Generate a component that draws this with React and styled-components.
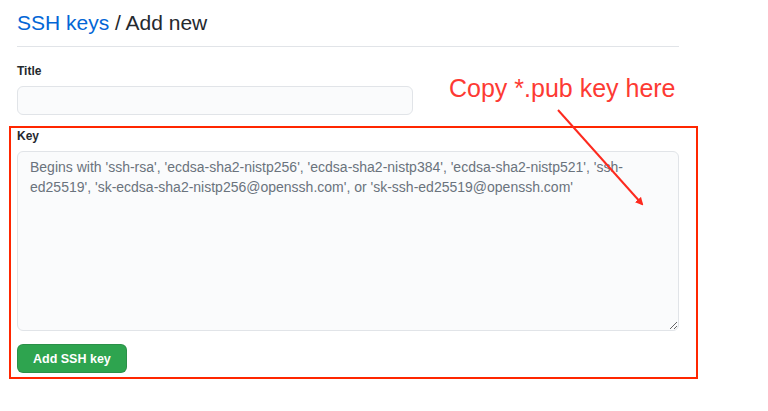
import React from "react";
import styled, { createGlobalStyle } from "styled-components";

const GlobalStyle = createGlobalStyle`
  body {
    margin: 0;
    background: #fff;
    font-family: "Liberation Sans", Arial, sans-serif;
    color: #24292e;
  }
`;

function App() {
  return (
    <>
      <GlobalStyle />
      <Page>
        <Header>
          <Crumb href="#">SSH keys</Crumb> / Add new
        </Header>
        <Field>
          <Label>Title</Label>
          <TitleInput type="text" />
        </Field>
        <Highlight>
          <Label>Key</Label>
          <KeyArea placeholder="Begins with 'ssh-rsa', 'ecdsa-sha2-nistp256', 'ecdsa-sha2-nistp384', 'ecdsa-sha2-nistp521', 'ssh-ed25519', 'sk-ecdsa-sha2-nistp256@openssh.com', or 'sk-ssh-ed25519@openssh.com'" />
          <SubmitButton>Add SSH key</SubmitButton>
        </Highlight>
        <Note>Copy *.pub key here</Note>
        <Arrow width="768" height="411" viewBox="0 0 768 411">
          <defs>
            <marker
              id="head"
              markerWidth="8"
              markerHeight="8"
              refX="6"
              refY="4"
              orient="auto"
              markerUnits="userSpaceOnUse"
            >
              <path d="M0,0 L8,4 L0,8 Z" fill="#fd2a1f" />
            </marker>
          </defs>
          <line
            x1="558"
            y1="110"
            x2="642"
            y2="204"
            stroke="#fd2a1f"
            strokeWidth="2"
            markerEnd="url(#head)"
          />
        </Arrow>
      </Page>
    </>
  );
}

export default App;

const Page = styled.div`
  position: relative;
  width: 662px;
  padding: 0 0 0 17px;
  height: 411px;
`;

const Header = styled.h1`
  margin: 0;
  padding: 10px 0 10px;
  font-size: 21px;
  font-weight: 400;
  line-height: 26px;
  border-bottom: 1px solid #e1e4e8;
  color: #24292e;
`;

const Crumb = styled.a`
  color: #0366d6;
  text-decoration: none;
`;

const Field = styled.div`
  margin-top: 17px;
`;

const Label = styled.label`
  display: block;
  font-size: 12px;
  font-weight: 700;
  line-height: 15px;
  margin-bottom: 7px;
  color: #24292e;
`;

const TitleInput = styled.input`
  display: block;
  box-sizing: border-box;
  width: 396px;
  height: 29px;
  margin: 0;
  border: 1px solid #e1e4e8;
  border-radius: 6px;
  background: #fafbfc;
  outline: none;
`;

const Highlight = styled.section`
  box-sizing: border-box;
  width: 689px;
  margin: 11px 0 0 -8px;
  padding: 1px 17px 4px 6px;
  border: 2px solid #ff2600;
`;

const KeyArea = styled.textarea`
  display: block;
  box-sizing: border-box;
  width: 662px;
  height: 180px;
  margin: 0;
  padding: 5px 12px;
  border: 1px solid #e1e4e8;
  border-radius: 6px;
  background: #fafbfc;
  font-family: "Liberation Sans", Arial, sans-serif;
  font-size: 14px;
  line-height: 20px;
  color: #24292e;
  outline: none;
  &::placeholder {
    color: #6a737d;
  }
`;

const SubmitButton = styled.button`
  display: block;
  margin-top: 13px;
  height: 29px;
  padding: 0 15px;
  border: 1px solid rgba(27, 31, 35, 0.15);
  border-radius: 6px;
  background: #2ea44f;
  color: #fff;
  font-family: "Liberation Sans", Arial, sans-serif;
  font-size: 12.5px;
  font-weight: 700;
`;

const Note = styled.div`
  position: absolute;
  left: 449px;
  top: 73px;
  font-size: 25px;
  line-height: 30px;
  color: #fd3a33;
`;

const Arrow = styled.svg`
  position: absolute;
  left: 0;
  top: 0;
  pointer-events: none;
`;
